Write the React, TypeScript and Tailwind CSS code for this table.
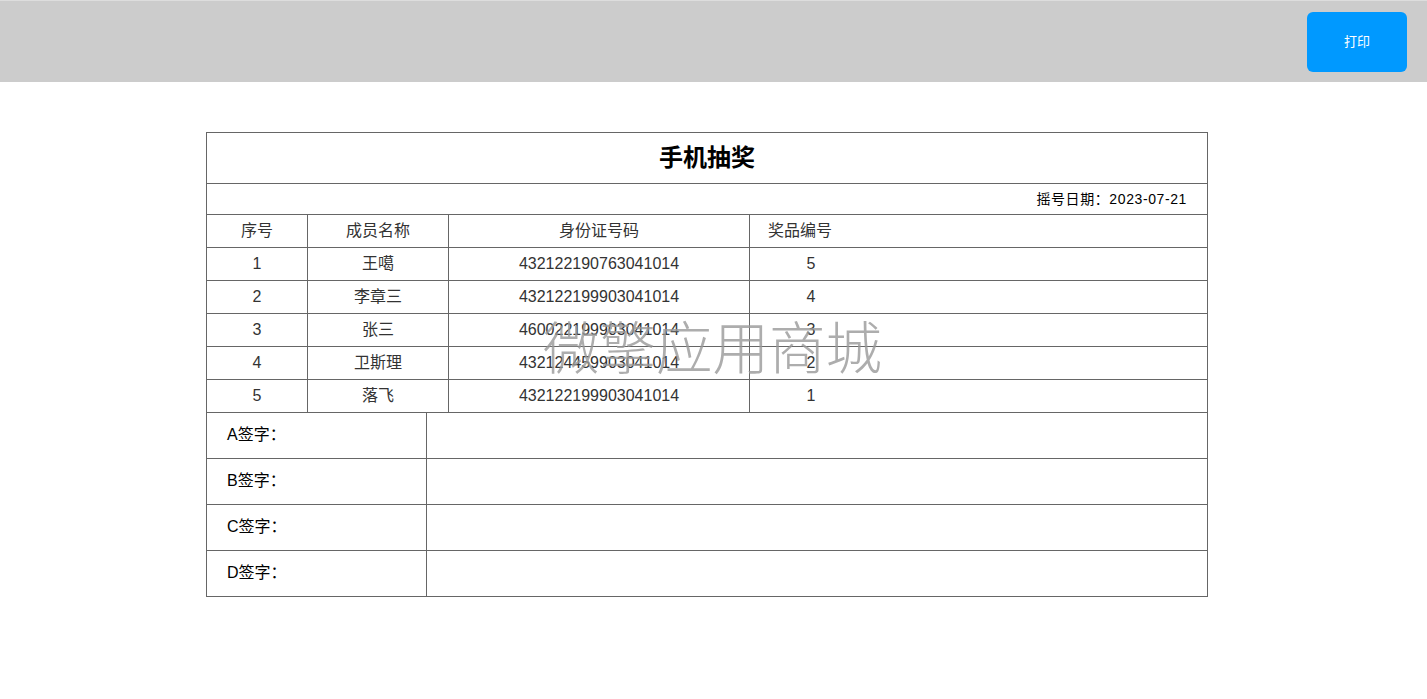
const rows = [
  { no: 1, name: '王噶', id: '432122190763041014', prize: 5 },
  { no: 2, name: '李章三', id: '432122199903041014', prize: 4 },
  { no: 3, name: '张三', id: '460022199903041014', prize: 3 },
  { no: 4, name: '卫斯理', id: '432124459903041014', prize: 2 },
  { no: 5, name: '落飞', id: '432122199903041014', prize: 1 },
];

const signers = ['A', 'B', 'C', 'D'];

export default function App() {
  return (
    <div className="relative min-h-[699px] bg-white font-['Liberation_Sans','Noto_Sans_CJK_SC',sans-serif] text-[#333]">
      {/* toolbar */}
      <div className="flex h-[82px] items-center justify-end border-t border-[#ddd] bg-[#cccccc] pr-[20px]">
        <button className="h-[60px] w-[100px] rounded-[6px] bg-[#0099ff] text-[13px] text-white">
          打印
        </button>
      </div>

      <div className="ml-[206px] mt-[50px] w-[1002px]">
        <table className="w-full border-collapse text-[16px]">
          <colgroup>
            <col className="w-[101px]" />
            <col className="w-[141px]" />
            <col className="w-[301px]" />
            <col />
          </colgroup>
          <tbody>
            <tr className="h-[51px]">
              <td colSpan={4} className="border border-[#666] text-center text-[24px] font-bold text-black">
                手机抽奖
              </td>
            </tr>
            <tr className="h-[31px]">
              <td colSpan={4} className="border border-[#666] pr-[20px] text-right text-[14px] tracking-[0.6px] text-black">
                摇号日期：2023-07-21
              </td>
            </tr>
            <tr className="h-[33px]">
              <td className="border border-[#666] text-center">序号</td>
              <td className="border border-[#666] text-center">成员名称</td>
              <td className="border border-[#666] text-center">身份证号码</td>
              <td className="border border-[#666] pl-[18px] text-left">奖品编号</td>
            </tr>
            {rows.map((r) => (
              <tr key={r.no} className="h-[33px]">
                <td className="border border-[#666] text-center">{r.no}</td>
                <td className="border border-[#666] text-center">{r.name}</td>
                <td className="border border-[#666] text-center">{r.id}</td>
                <td className="border border-[#666]">
                  <div className="w-[122px] text-center">{r.prize}</div>
                </td>
              </tr>
            ))}
          </tbody>
        </table>

        <table className="w-full border-collapse text-[16px] text-black">
          <colgroup>
            <col className="w-[220px]" />
            <col />
          </colgroup>
          <tbody>
            {signers.map((s, i) => (
              <tr key={s} className={i === 0 ? 'h-[45px]' : 'h-[46px]'}>
                <td className="border border-t-0 border-[#666] pl-[20px]">{s}签字：</td>
                <td className="border border-t-0 border-[#666]"></td>
              </tr>
            ))}
          </tbody>
        </table>
      </div>

      {/* watermark */}
      <div className="pointer-events-none absolute left-[543px] top-[316px] font-['Noto_Sans_CJK_SC',sans-serif] text-[56.5px] font-light leading-none text-[#999]/80">
        微擎应用商城
      </div>
    </div>
  );
}
